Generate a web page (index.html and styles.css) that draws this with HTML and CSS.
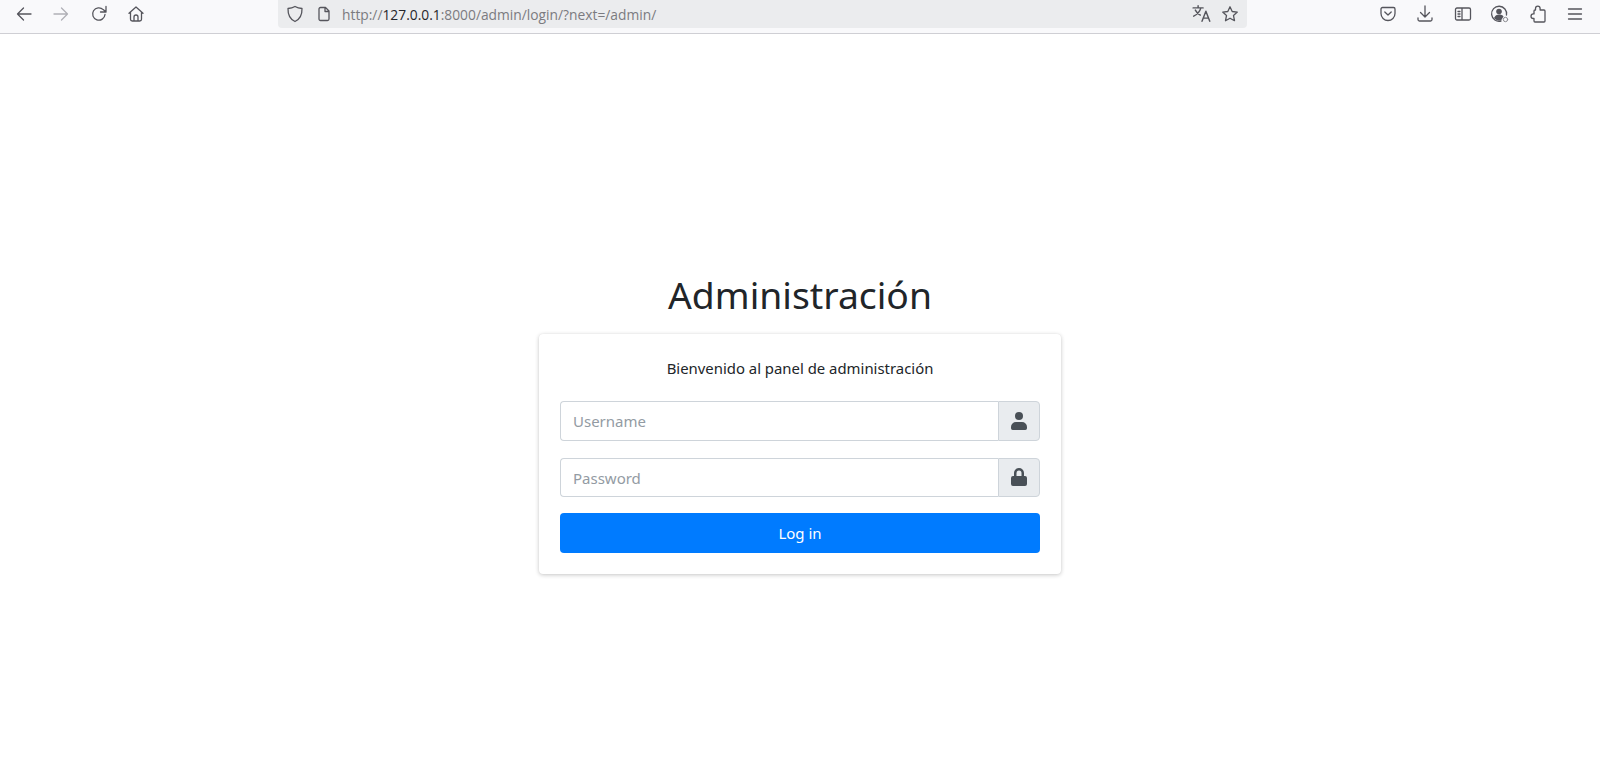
FILE: index.html
```html
<!DOCTYPE html>
<html lang="es">
<head>
<meta charset="UTF-8">
<meta name="viewport" content="width=device-width, initial-scale=1.0">
<title>Administración</title>
<link rel="stylesheet" href="styles.css">
</head>
<body>
<!-- browser chrome -->
<div class="toolbar">
    <div class="nav-buttons">
        <span class="tool">
            <svg width="18" height="18" viewBox="0 0 18 18"><path d="M16 9H2.500M8.500 3L2.500 9l6 6"/></svg>
        </span>
        <span class="tool tool-off">
            <svg width="18" height="18" viewBox="0 0 18 18"><path d="M2 9h13.500M9.500 3l6 6-6 6"/></svg>
        </span>
        <span class="tool">
            <svg width="18" height="18" viewBox="0 0 18 18"><path d="M15 9.500A6.200 6.200 0 1 1 13.200 4.600L16 7M16 1.500V7h-5.500"/></svg>
        </span>
        <span class="tool">
            <svg width="18" height="18" viewBox="0 0 18 18"><path d="M2 8.200L9 2l7 6.200M3.500 7v7.200A1.800 1.800 0 0 0 5.300 16h7.400a1.800 1.800 0 0 0 1.800-1.800V7M7 16v-4a2 2 0 0 1 4 0v4"/></svg>
        </span>
    </div>
    <div class="urlbar">
        <svg class="url-icon" width="18" height="18" viewBox="0 0 18 18"><path d="M9 1.500c2.200 1.300 4.400 1.900 7 2 .2 6.500-2 10.700-7 13-5-2.300-7.200-6.500-7-13 2.600-.1 4.800-.7 7-2z"/></svg>
        <svg class="url-icon page-icon" width="16" height="16" viewBox="0 0 16 16"><path d="M3 3a1.500 1.500 0 0 1 1.500-1.500H9.500L13 5v8a1.500 1.500 0 0 1-1.500 1.500h-7A1.500 1.500 0 0 1 3 13zM9 1.500V5.500h4"/></svg>
        <span class="url-text">http://<b>127.0.0.1</b>:8000/admin/login/?next=/admin/</span>
        <svg class="url-icon translate-icon" width="20" height="20" viewBox="0 0 18 18"><path d="M1 3.500h9M5.500 1.500v2M8 3.500C7 7 4.500 9.500 1.500 11M3 5.500c1 2 2.500 3.500 4.500 4.500M9 15.500l3.500-9 3.500 9M10.200 12.700h4.600"/></svg>
        <svg class="url-icon" width="18" height="18" viewBox="0 0 18 18"><path d="M9 1.800l2.200 4.700 5.100.6-3.800 3.500 1 5.100L9 13.200l-4.500 2.500 1-5.100-3.800-3.500 5.100-.6z"/></svg>
    </div>
    <div class="right-buttons">
        <span class="tool">
            <svg width="18" height="18" viewBox="0 0 18 18"><path d="M3.500 2.500h11A1.500 1.500 0 0 1 16 4v4.500a7 7 0 0 1-14 0V4a1.500 1.500 0 0 1 1.500-1.500zM5.800 7L9 10l3.200-3"/></svg>
        </span>
        <span class="tool">
            <svg width="18" height="18" viewBox="0 0 18 18"><path d="M9 1v10.500M4.500 7.500L9 12l4.500-4.500M2 13v1.500A1.500 1.500 0 0 0 3.500 16h11a1.500 1.500 0 0 0 1.500-1.500V13"/></svg>
        </span>
        <span class="tool">
            <svg width="18" height="18" viewBox="0 0 18 18"><path d="M3 3h12a1.500 1.500 0 0 1 1.500 1.500v9A1.500 1.500 0 0 1 15 15H3a1.500 1.500 0 0 1-1.500-1.500v-9A1.500 1.500 0 0 1 3 3zM8 3v12M4 6.500h2M4 9h2M4 11.500h2"/></svg>
        </span>
        <span class="tool">
            <svg width="20" height="20" viewBox="0 0 20 20"><path d="M16.500 11A7.500 7.500 0 1 0 11 17"/><circle class="solid" cx="9" cy="7.500" r="2.800"/><path class="solid" d="M4 14c1-2.500 3-3.500 5-3.500s3.500.6 4.500 2L11 16.500c-3 .3-5.500-.6-7-2.500z"/><circle class="thin" cx="15.500" cy="15.500" r="2.200"/></svg>
        </span>
        <span class="tool">
            <svg width="18" height="18" viewBox="0 0 18 18"><path d="M6.500 3.500a2.300 2.300 0 0 1 4.600 0V5H15a1 1 0 0 1 1 1v10a1 1 0 0 1-1 1H6a1 1 0 0 1-1-1v-2.500H4.300a2.300 2.300 0 0 1 0-4.600H5V6a1 1 0 0 1 1-1h.5z"/></svg>
        </span>
        <span class="tool">
            <svg width="18" height="18" viewBox="0 0 18 18"><path d="M2.500 4h13M2.500 9h13M2.500 14h13"/></svg>
        </span>
    </div>
</div>

<main class="login-page">
    <h1 class="login-title">Administración</h1>
    <div class="login-card">
        <p class="login-msg">Bienvenido al panel de administración</p>
        <div class="input-group">
            <span class="fake-input">Username</span>
            <span class="input-addon">
                <svg width="16" height="18" viewBox="0 0 16 18"><circle cx="8" cy="4" r="4"/><path d="M5 10h6a5 5 0 0 1 5 5v1.300a1.700 1.700 0 0 1-1.700 1.700H1.700A1.700 1.700 0 0 1 0 16.300V15a5 5 0 0 1 5-5z"/></svg>
            </span>
        </div>
        <div class="input-group">
            <span class="fake-input">Password</span>
            <span class="input-addon">
                <svg width="16" height="18" viewBox="0 0 16 18"><path fill-rule="evenodd" d="M3 8V5a5 5 0 0 1 10 0v3h1A2 2 0 0 1 16 10v6a2 2 0 0 1-2 2H2a2 2 0 0 1-2-2v-6a2 2 0 0 1 2-2zM5.500 8h5V5a2.500 2.500 0 0 0-5 0z"/></svg>
            </span>
        </div>
        <button class="login-btn">Log in</button>
    </div>
</main>
</body>
</html>
```

FILE: styles.css
```css
* {
    box-sizing: border-box;
}

body {
    margin: 0;
    padding: 0;
    background-color: #fff;
    color: #212529;
    font-family: "Noto Sans", "Open Sans", sans-serif;
}

/* browser bar */
.toolbar {
    display: flex;
    align-items: flex-start;
    height: 34px;
    padding: 0 6px 0 5px;
    background-color: #f9f9fb;
    border-bottom: 1px solid #cfcfd4;
}
.nav-buttons, .right-buttons {
    display: flex;
    height: 27px;
}
.right-buttons {
    margin-left: auto;
}
.tool {
    display: flex;
    align-items: center;
    justify-content: center;
    width: 37.5px;
}
.tool svg, .url-icon {
    fill: none;
    stroke: #55555c;
    stroke-width: 1.3;
    stroke-linejoin: round;
    stroke-linecap: round;
}
.tool-off svg {
    stroke: #b0b0b6;
}
.tool svg .solid {
    fill: #55555c;
    stroke: none;
}
.tool svg .thin {
    stroke: #8a8a90;
    stroke-width: 1;
}
.urlbar {
    display: flex;
    align-items: center;
    width: 969px;
    height: 28px;
    margin-left: 123px;
    padding: 0 8px;
    background-color: #ebecee;
    border-radius: 0 0 4px 4px;
}
.page-icon {
    margin-left: 12px;
}
.url-text {
    margin-left: 10px;
    font-family: "Open Sans", sans-serif;
    font-size: 13.8px;
    color: #7b7b80;
    white-space: nowrap;
}
.url-text b {
    font-weight: 400;
    color: #26262b;
}
.translate-icon {
    margin-left: auto;
    margin-right: 9px;
}

/* login */
.login-page {
    display: flex;
    flex-direction: column;
    align-items: center;
    min-height: 748px;
    padding-top: 236px;
}
.login-title {
    margin: 0 0 14px;
    font-size: 37.3px;
    font-weight: 400;
    line-height: 50px;
}
.login-card {
    width: 522px;
    padding: 20px 21px 21.5px;
    background-color: #fff;
    border-radius: 4px;
    box-shadow: 0 0 1px rgba(0, 0, 0, 0.08), 0 1px 4px rgba(0, 0, 0, 0.22);
}
.login-msg {
    margin: 0 0 19px;
    font-size: 14.9px;
    line-height: 28px;
    text-align: center;
}
.input-group {
    display: flex;
    height: 39.5px;
    margin-bottom: 17px;
}
.fake-input {
    flex: 1;
    padding: 0 12px;
    border: 1px solid #ced4da;
    border-right: none;
    border-radius: 4px 0 0 4px;
    font-size: 15px;
    line-height: 39px;
    color: #939ba3;
}
.input-addon {
    display: flex;
    align-items: center;
    justify-content: center;
    width: 42px;
    background-color: #e9ecef;
    border: 1px solid #ced4da;
    border-radius: 0 4px 4px 0;
}
.input-addon svg {
    fill: #495057;
}
.login-btn {
    display: block;
    width: 100%;
    height: 39.5px;
    margin-top: -1px;
    padding: 0;
    border: none;
    border-radius: 4px;
    background-color: #007bff;
    color: #fff;
    font-family: inherit;
    font-size: 15px;
}
```
